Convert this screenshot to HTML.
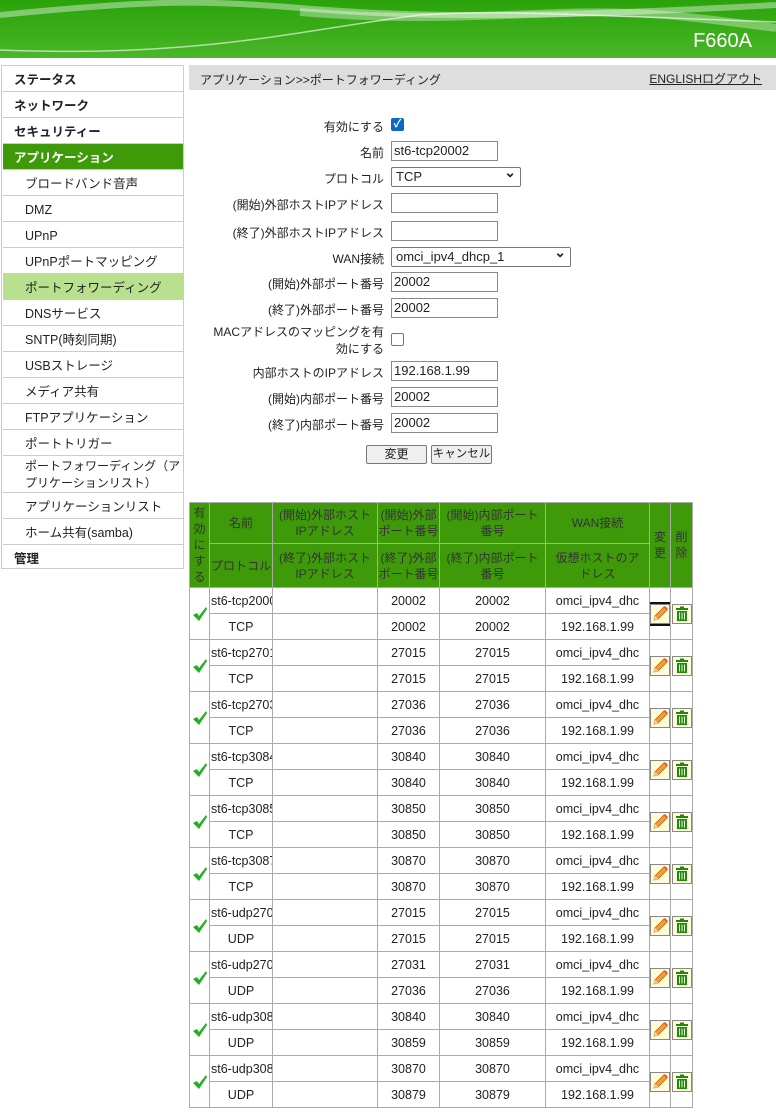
<!DOCTYPE html>
<html><head><meta charset="utf-8">
<style>
*{box-sizing:border-box;margin:0;padding:0}
body{width:776px;height:1120px;background:#fff;font-family:"Liberation Sans","Noto Sans CJK JP",sans-serif;font-size:12px;color:#222;position:relative;overflow:hidden}
.hdr{position:absolute;left:0;top:0;width:776px;height:58px;background:linear-gradient(180deg,#2aa30a 0%,#3cae1a 60%,#4ab72a 100%);overflow:hidden}
.hdr .t{position:absolute;right:24px;top:30px;color:#fff;font-size:20px}
.side{position:absolute;left:1px;top:65px;width:183px;height:504px;border:1px solid #ccc;background:#fff}
.si{position:absolute;left:1px;width:180px;border-bottom:1px solid #ccc;font-size:12.5px;padding-left:11px;line-height:25px;padding-top:2px;height:26px;white-space:nowrap}
.si.b{font-weight:bold}
.si.s{padding-left:22px}
.bar{position:absolute;left:189px;top:65px;width:587px;height:25px;background:#dedede}
.bar .l{position:absolute;left:11px;top:6px;font-size:12px}
.bar .r{position:absolute;right:14px;top:5px;font-size:12px;text-decoration:underline}
.lab{position:absolute;right:392px;font-size:12px;text-align:right}
.inp{position:absolute;left:391px;width:107px;height:20px;border:1px solid #8a8a8a;font-size:13px;padding-left:2px;line-height:18px}
.sel{position:absolute;left:391px;height:20px;border:1px solid #777;border-radius:2px;font-size:13px;padding-left:4px;line-height:18px}
.sel:after{content:"⌄";position:absolute;right:4px;top:-5px;font-weight:bold;font-size:14px}
.btn{position:absolute;top:445px;height:19px;border:1px solid #777;border-radius:2px;background:#efefef;font-size:12px;text-align:center;line-height:17px;white-space:nowrap;overflow:hidden}
table{position:absolute;left:189px;top:502px;border-collapse:collapse;table-layout:fixed;width:503px}
td{border:1px solid #aaa;text-align:center;font-size:12.5px;overflow:hidden;white-space:nowrap;height:26px;padding:0}
th{background:#3f9a0a;border:1px solid #aaa;font-weight:normal;color:#333;font-size:12px;line-height:16px;padding:0}
td.n{text-align:left;padding-left:1px}
td.e{padding-top:0}
svg.i{vertical-align:middle;display:inline-block}
</style></head><body>
<svg width="0" height="0" style="position:absolute">
<defs>
<symbol id="ck" viewBox="0 0 16 16"><path d="M1 9 L5 7 L7 10 L14 1 L15 3 L7 15 Z" fill="#22b022"/></symbol>
<symbol id="pen" viewBox="0 0 20 20"><rect x="0.5" y="0.5" width="19" height="19" fill="#fdfbd8" stroke="#888"/><path d="M4 16 L5 12 L14 3 L17 6 L8 15 Z" fill="#f0a030" stroke="#c06010" stroke-width=".8"/><path d="M14 3 L17 6 L18 5 L15 2 Z" fill="#e05050"/><path d="M4 16 L5 12 L8 15Z" fill="#f5deb3"/></symbol>
<symbol id="bin" viewBox="0 0 20 20"><rect x="0.5" y="0.5" width="19" height="19" fill="#fdfbd8" stroke="#888"/><rect x="4" y="4" width="12" height="2" fill="#1a8a10"/><rect x="8" y="2.5" width="4" height="2" fill="#1a8a10"/><rect x="5" y="7" width="10" height="10" fill="#1a8a10"/><path d="M7.5 8.5v7M10 8.5v7M12.5 8.5v7" stroke="#fdfbd8" stroke-width="1"/></symbol>
</defs></svg>
<div class="hdr">
<svg width="776" height="58" style="position:absolute;left:0;top:0">
<path d="M0 50 C200 58 300 30 420 15 C500 10 560 14 776 22" stroke="rgba(255,255,255,.6)" stroke-width="1.5" fill="none"/>
<path d="M0 15 C150 0 200 0 300 8 C400 16 500 20 776 5" stroke="rgba(255,255,255,.4)" stroke-width="6" fill="none"/>
<path d="M300 12 C400 20 450 17 560 13 C650 10 700 18 776 28" stroke="rgba(255,255,255,.35)" stroke-width="8" fill="none"/>
</svg>
<div class="t">F660A</div></div>
<div class="side">
<div class="si b" style="top:0">ステータス</div>
<div class="si b" style="top:26px">ネットワーク</div>
<div class="si b" style="top:52px">セキュリティー</div>
<div class="si b" style="top:78px;background:#3f9a0a;color:#fff">アプリケーション</div>
<div class="si s" style="top:104px">ブロードバンド音声</div>
<div class="si s" style="top:130px">DMZ</div>
<div class="si s" style="top:156px">UPnP</div>
<div class="si s" style="top:182px">UPnPポートマッピング</div>
<div class="si s" style="top:208px;background:#b9e08e">ポートフォワーディング</div>
<div class="si s" style="top:234px">DNSサービス</div>
<div class="si s" style="top:260px">SNTP(時刻同期)</div>
<div class="si s" style="top:286px">USBストレージ</div>
<div class="si s" style="top:312px">メディア共有</div>
<div class="si s" style="top:338px">FTPアプリケーション</div>
<div class="si s" style="top:364px">ポートトリガー</div>
<div class="si s" style="top:390px;line-height:17px;padding-top:2px;height:37px;font-size:12px">ポートフォワーディング（ア<br>プリケーションリスト）</div>
<div class="si s" style="top:427px">アプリケーションリスト</div>
<div class="si s" style="top:453px">ホーム共有(samba)</div>
<div class="si b" style="top:479px;border:none">管理</div>
</div>
<div class="bar"><span class="l">アプリケーション&gt;&gt;ポートフォワーディング</span><span class="r">ENGLISHログアウト</span></div>

<div class="lab" style="top:118px">有効にする</div>
<div style="position:absolute;left:391px;top:118px;width:13px;height:13px;background:#0a68c8;border-radius:2px;color:#fff;font-size:11px;line-height:13px;text-align:center;font-weight:bold">✓</div>
<div class="lab" style="top:144px">名前</div><div class="inp" style="top:141px">st6-tcp20002</div>
<div class="lab" style="top:170px">プロトコル</div><div class="sel" style="top:167px;width:130px">TCP</div>
<div class="lab" style="top:196px">(開始)外部ホストIPアドレス</div><div class="inp" style="top:193px"></div>
<div class="lab" style="top:224px">(終了)外部ホストIPアドレス</div><div class="inp" style="top:221px"></div>
<div class="lab" style="top:250px">WAN接続</div><div class="sel" style="top:247px;width:180px">omci_ipv4_dhcp_1</div>
<div class="lab" style="top:275px">(開始)外部ポート番号</div><div class="inp" style="top:272px">20002</div>
<div class="lab" style="top:301px">(終了)外部ポート番号</div><div class="inp" style="top:298px">20002</div>
<div class="lab" style="top:324px;line-height:17px">MACアドレスのマッピングを有<br>効にする</div>
<div style="position:absolute;left:391px;top:333px;width:13px;height:13px;border:1px solid #777;border-radius:2px"></div>
<div class="lab" style="top:364px">内部ホストのIPアドレス</div><div class="inp" style="top:361px">192.168.1.99</div>
<div class="lab" style="top:390px">(開始)内部ポート番号</div><div class="inp" style="top:387px">20002</div>
<div class="lab" style="top:416px">(終了)内部ポート番号</div><div class="inp" style="top:413px">20002</div>
<div class="btn" style="left:366px;width:61px">変更</div>
<div class="btn" style="left:431px;width:61px;font-size:11.5px">キャンセル</div>

<table>
<colgroup><col style="width:20px"><col style="width:63px"><col style="width:105px"><col style="width:62px"><col style="width:106px"><col style="width:104px"><col style="width:21px"><col style="width:22px"></colgroup>
<tr style="height:41px"><th rowspan="2" style="line-height:16px">有<br>効<br>に<br>す<br>る</th><th>名前</th><th>(開始)外部ホスト<br>IPアドレス</th><th>(開始)外部<br>ポート番号</th><th>(開始)内部ポート<br>番号</th><th>WAN接続</th><th rowspan="2">変<br>更</th><th rowspan="2">削<br>除</th></tr>
<tr style="height:44px"><th>プロトコル</th><th>(終了)外部ホスト<br>IPアドレス</th><th>(終了)外部<br>ポート番号</th><th>(終了)内部ポート<br>番号</th><th>仮想ホストのア<br>ドレス</th></tr>
<tr><td rowspan="2"><svg class="i" width="16" height="16"><use href="#ck"/></svg></td><td class="n">st6-tcp20002</td><td></td><td>20002</td><td>20002</td><td>omci_ipv4_dhc</td><td rowspan="2"><svg class="i" width="20" height="20" style="outline:2px solid #111"><use href="#pen"/></svg></td><td rowspan="2"><svg class="i" width="20" height="20"><use href="#bin"/></svg></td></tr>
<tr><td>TCP</td><td></td><td>20002</td><td>20002</td><td>192.168.1.99</td></tr>
<tr><td rowspan="2"><svg class="i" width="16" height="16"><use href="#ck"/></svg></td><td class="n">st6-tcp27015</td><td></td><td>27015</td><td>27015</td><td>omci_ipv4_dhc</td><td rowspan="2"><svg class="i" width="20" height="20"><use href="#pen"/></svg></td><td rowspan="2"><svg class="i" width="20" height="20"><use href="#bin"/></svg></td></tr>
<tr><td>TCP</td><td></td><td>27015</td><td>27015</td><td>192.168.1.99</td></tr>
<tr><td rowspan="2"><svg class="i" width="16" height="16"><use href="#ck"/></svg></td><td class="n">st6-tcp27036</td><td></td><td>27036</td><td>27036</td><td>omci_ipv4_dhc</td><td rowspan="2"><svg class="i" width="20" height="20"><use href="#pen"/></svg></td><td rowspan="2"><svg class="i" width="20" height="20"><use href="#bin"/></svg></td></tr>
<tr><td>TCP</td><td></td><td>27036</td><td>27036</td><td>192.168.1.99</td></tr>
<tr><td rowspan="2"><svg class="i" width="16" height="16"><use href="#ck"/></svg></td><td class="n">st6-tcp30840</td><td></td><td>30840</td><td>30840</td><td>omci_ipv4_dhc</td><td rowspan="2"><svg class="i" width="20" height="20"><use href="#pen"/></svg></td><td rowspan="2"><svg class="i" width="20" height="20"><use href="#bin"/></svg></td></tr>
<tr><td>TCP</td><td></td><td>30840</td><td>30840</td><td>192.168.1.99</td></tr>
<tr><td rowspan="2"><svg class="i" width="16" height="16"><use href="#ck"/></svg></td><td class="n">st6-tcp30850</td><td></td><td>30850</td><td>30850</td><td>omci_ipv4_dhc</td><td rowspan="2"><svg class="i" width="20" height="20"><use href="#pen"/></svg></td><td rowspan="2"><svg class="i" width="20" height="20"><use href="#bin"/></svg></td></tr>
<tr><td>TCP</td><td></td><td>30850</td><td>30850</td><td>192.168.1.99</td></tr>
<tr><td rowspan="2"><svg class="i" width="16" height="16"><use href="#ck"/></svg></td><td class="n">st6-tcp30870</td><td></td><td>30870</td><td>30870</td><td>omci_ipv4_dhc</td><td rowspan="2"><svg class="i" width="20" height="20"><use href="#pen"/></svg></td><td rowspan="2"><svg class="i" width="20" height="20"><use href="#bin"/></svg></td></tr>
<tr><td>TCP</td><td></td><td>30870</td><td>30870</td><td>192.168.1.99</td></tr>
<tr><td rowspan="2"><svg class="i" width="16" height="16"><use href="#ck"/></svg></td><td class="n">st6-udp27015</td><td></td><td>27015</td><td>27015</td><td>omci_ipv4_dhc</td><td rowspan="2"><svg class="i" width="20" height="20"><use href="#pen"/></svg></td><td rowspan="2"><svg class="i" width="20" height="20"><use href="#bin"/></svg></td></tr>
<tr><td>UDP</td><td></td><td>27015</td><td>27015</td><td>192.168.1.99</td></tr>
<tr><td rowspan="2"><svg class="i" width="16" height="16"><use href="#ck"/></svg></td><td class="n">st6-udp27031</td><td></td><td>27031</td><td>27031</td><td>omci_ipv4_dhc</td><td rowspan="2"><svg class="i" width="20" height="20"><use href="#pen"/></svg></td><td rowspan="2"><svg class="i" width="20" height="20"><use href="#bin"/></svg></td></tr>
<tr><td>UDP</td><td></td><td>27036</td><td>27036</td><td>192.168.1.99</td></tr>
<tr><td rowspan="2"><svg class="i" width="16" height="16"><use href="#ck"/></svg></td><td class="n">st6-udp30840</td><td></td><td>30840</td><td>30840</td><td>omci_ipv4_dhc</td><td rowspan="2"><svg class="i" width="20" height="20"><use href="#pen"/></svg></td><td rowspan="2"><svg class="i" width="20" height="20"><use href="#bin"/></svg></td></tr>
<tr><td>UDP</td><td></td><td>30859</td><td>30859</td><td>192.168.1.99</td></tr>
<tr><td rowspan="2"><svg class="i" width="16" height="16"><use href="#ck"/></svg></td><td class="n">st6-udp30870</td><td></td><td>30870</td><td>30870</td><td>omci_ipv4_dhc</td><td rowspan="2"><svg class="i" width="20" height="20"><use href="#pen"/></svg></td><td rowspan="2"><svg class="i" width="20" height="20"><use href="#bin"/></svg></td></tr>
<tr><td>UDP</td><td></td><td>30879</td><td>30879</td><td>192.168.1.99</td></tr>
</table>
</body></html>
